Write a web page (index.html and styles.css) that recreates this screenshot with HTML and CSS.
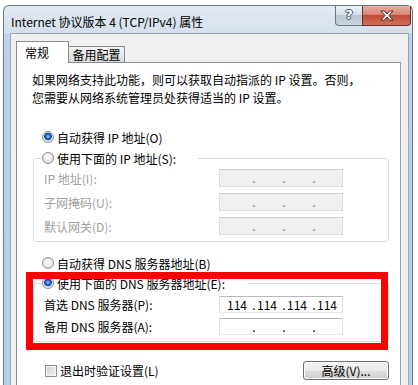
FILE: index.html
```html
<!DOCTYPE html>
<html>
	<head>
		<meta charset="utf-8">
		<title>Internet 协议版本 4 (TCP/IPv4) 属性</title>
		<link rel="stylesheet" href="styles.css">
	</head>
	<body>
		<div class="window">
			<div class="titlebar">
				<span class="title">Internet 协议版本 4 (TCP/IPv4) 属性</span>
				<div class="caption">
					<div class="btn-help">?</div>
					<div class="btn-close">
						<svg width="14" height="11" viewBox="0 0 14 11"><path d="M1 1H4.6L7 4L9.4 1H13L8.9 5.5L13 10H9.4L7 7L4.6 10H1L5.1 5.5Z" fill="#fff" stroke="#5b2a24" stroke-width="1"/></svg>
					</div>
				</div>
			</div>
			<div class="client">
				<div class="tabs">
					<div class="tab active">常规</div>
					<div class="tab">备用配置</div>
				</div>
				<div class="panel">
					<p class="intro">如果网络支持此功能，则可以获取自动指派的 IP 设置。否则，<br>您需要从网络系统管理员处获得适当的 IP 设置。</p>
					<div class="option first"><span class="radio checked"></span>自动获得 IP 地址(O)</div>
					<fieldset class="group">
						<legend><span class="radio"></span>使用下面的 IP 地址(S):</legend>
						<div class="row disabled first">
							<span class="label">IP 地址(I):</span>
							<div class="ipbox"><span class="seg"></span><span class="dot">.</span><span class="seg"></span><span class="dot">.</span><span class="seg"></span><span class="dot">.</span><span class="seg"></span></div>
						</div>
						<div class="row disabled">
							<span class="label">子网掩码(U):</span>
							<div class="ipbox"><span class="seg"></span><span class="dot">.</span><span class="seg"></span><span class="dot">.</span><span class="seg"></span><span class="dot">.</span><span class="seg"></span></div>
						</div>
						<div class="row disabled">
							<span class="label">默认网关(D):</span>
							<div class="ipbox"><span class="seg"></span><span class="dot">.</span><span class="seg"></span><span class="dot">.</span><span class="seg"></span><span class="dot">.</span><span class="seg"></span></div>
						</div>
					</fieldset>
					<div class="option dns"><span class="radio"></span>自动获得 DNS 服务器地址(B)</div>
					<fieldset class="group dns-group">
						<legend><span class="radio checked"></span>使用下面的 DNS 服务器地址(E):</legend>
						<div class="row first">
							<span class="label">首选 DNS 服务器(P):</span>
							<div class="ipbox"><span class="seg">114</span><span class="dot">.</span><span class="seg">114</span><span class="dot">.</span><span class="seg">114</span><span class="dot">.</span><span class="seg">114</span></div>
						</div>
						<div class="row">
							<span class="label">备用 DNS 服务器(A):</span>
							<div class="ipbox"><span class="seg"></span><span class="dot">.</span><span class="seg"></span><span class="dot">.</span><span class="seg"></span><span class="dot">.</span><span class="seg"></span></div>
						</div>
					</fieldset>
					<div class="bottom-row">
						<div class="check-label"><span class="checkbox"></span>退出时验证设置(L)</div>
						<div class="button">高级(V)...</div>
					</div>
				</div>
			</div>
		</div>
		<div class="mark"></div>
	</body>
</html>
```
FILE: styles.css
```css
*{
	margin: 0px;
	padding: 0px;
	box-sizing: border-box;
}
body{
	background: #fff;
	font-family: "Noto Sans CJK SC", sans-serif;
	font-size: 12px;
	color: #000;
	overflow: hidden;
}
.window{
	margin: 5px 0 0 3px;
	width: 410px;
	border: 1px solid #6b7888;
	border-bottom: none;
	border-radius: 6px 6px 0 0;
	background: linear-gradient(to bottom, #e3eaf2 0px, #d5e0ec 27px, #bed3ea 28px, #b6cde8 100%);
}
.titlebar{
	display: flex;
	align-items: flex-start;
	height: 27px;
}
.title{
	flex: 1;
	margin-top: 9px;
	padding-left: 7px;
	line-height: 14px;
	white-space: nowrap;
}
.caption{
	display: flex;
	margin-right: 1px;
}
.btn-help,.btn-close{
	height: 20px;
	display: flex;
	align-items: center;
	justify-content: center;
}
.btn-help{
	width: 27px;
	padding-bottom: 3px;
	border: 1px solid #6d7888;
	border-top: none;
	border-right: none;
	border-radius: 0 0 0 4px;
	background: linear-gradient(to bottom, #eef2f7 0%, #d6dee8 45%, #bcc7d4 50%, #c9d3de 100%);
	color: #fff;
	font-family: "DejaVu Sans", sans-serif;
	font-weight: bold;
	font-size: 13px;
	text-shadow: 0 0 1px #4a5566, 1px 0 0 #4a5566, -1px 0 0 #4a5566, 0 1px 0 #4a5566, 0 -1px 0 #4a5566;
}
.btn-close{
	width: 49px;
	border: 1px solid #6b2e26;
	border-top: none;
	border-radius: 0 0 4px 0;
	background: linear-gradient(to bottom, #eab0a3 0%, #d98474 45%, #c24a36 50%, #d0705c 100%);
}
.client{
	margin: 0 3px 0 6px;
	border: 1px solid #98a6b6;
	border-bottom: none;
	background: #f0f0f0;
	padding: 7px 0 0 5px;
}
.tabs{
	display: flex;
	align-items: flex-end;
	height: 21px;
}
.tab{
	width: 57px;
	height: 16px;
	margin-left: -1px;
	border: 1px solid #898c95;
	border-bottom: none;
	background: linear-gradient(to bottom, #f3f3f3, #dadada);
	text-align: center;
	line-height: 16px;
}
.tab.active{
	width: 53px;
	height: 22px;
	margin-left: 0;
	margin-bottom: -1px;
	padding-left: 8px;
	background: #fff;
	text-align: left;
	line-height: 21px;
	position: relative;
	z-index: 1;
}
.panel{
	width: 385px;
	border: 1px solid #898c95;
	border-right-color: #a0a0a0;
	background: #fff;
	padding-bottom: 30px;
}
.intro{
	margin: 8px 0 0 15px;
	line-height: 18px;
	white-space: nowrap;
}
.radio{
	display: inline-block;
	flex: none;
	width: 12px;
	height: 12px;
	border: 1px solid #8f9091;
	border-radius: 50%;
	background: radial-gradient(circle at 50% 40%, #ffffff 0%, #e6e6e6 60%, #cfcfcf 100%);
}
.radio.checked{
	background: radial-gradient(circle at 50% 45%, #8fd0ff 0px, #2b74d1 2px, #0d3f8f 3.5px, #ececec 4.2px, #d6d6d6 100%);
}
.option{
	display: flex;
	align-items: center;
	gap: 3px;
	height: 16px;
	margin-left: 25px;
}
.option.first{
	margin-top: 22px;
}
.option.dns{
	margin-top: 13px;
}
.group{
	margin: 5px 0 0 16px;
	width: 356px;
	border: 1px solid #d5dde3;
	border-radius: 3px;
	padding: 0 0 6px 8px;
}
.dns-group{
	margin-top: 4px;
}
.group legend{
	display: flex;
	align-items: center;
	gap: 3px;
	height: 16px;
	padding: 0 22px 0 0;
	white-space: nowrap;
}
.row{
	display: flex;
	align-items: center;
	height: 18px;
	margin: 6px 0 0 2px;
}
.row.first{
	margin-top: 3px;
}
.dns-group .row{
	height: 17px;
	margin-top: 5px;
}
.label{
	width: 175px;
	white-space: nowrap;
}
.disabled{
	color: #a0a0a0;
}
.ipbox{
	display: flex;
	align-items: center;
	width: 124px;
	height: 100%;
	padding-left: 6px;
	border: 1px solid;
	border-color: #b5b9be #dbdfe6 #e3e9ef #e2e3ea;
	background: #fff;
	color: #000;
	line-height: 14px;
}
.disabled .ipbox{
	background: #f0f0f0;
	border-color: #cfcfcf #dcdcdc #dcdcdc #dcdcdc;
	color: #808080;
}
.ipbox .seg{
	width: 26px;
	padding-left: 1px;
}
.ipbox .dot{
	width: 4px;
	text-align: center;
}
.bottom-row{
	display: flex;
	align-items: center;
	justify-content: space-between;
	height: 19px;
	margin: 19px 11px 0 28px;
}
.check-label{
	display: flex;
	align-items: center;
	gap: 3px;
}
.checkbox{
	width: 12px;
	height: 12px;
	border: 1px solid #8f8f8f;
	background: linear-gradient(135deg, #cfcfcf, #f6f6f6);
	box-shadow: inset 0 0 0 1px #f4f4f4;
}
.button{
	width: 86px;
	height: 19px;
	border: 1px solid #707070;
	border-radius: 3px;
	background: linear-gradient(to bottom, #f2f2f2 0%, #ebebeb 50%, #dddddd 51%, #cfcfcf 100%);
	box-shadow: inset 0 0 0 1px #fbfbfb;
	text-align: center;
	line-height: 17px;
}
.mark{
	position: absolute;
	left: 26px;
	top: 272px;
	width: 362px;
	height: 78px;
	border: 7px solid #ff0000;
}
```
